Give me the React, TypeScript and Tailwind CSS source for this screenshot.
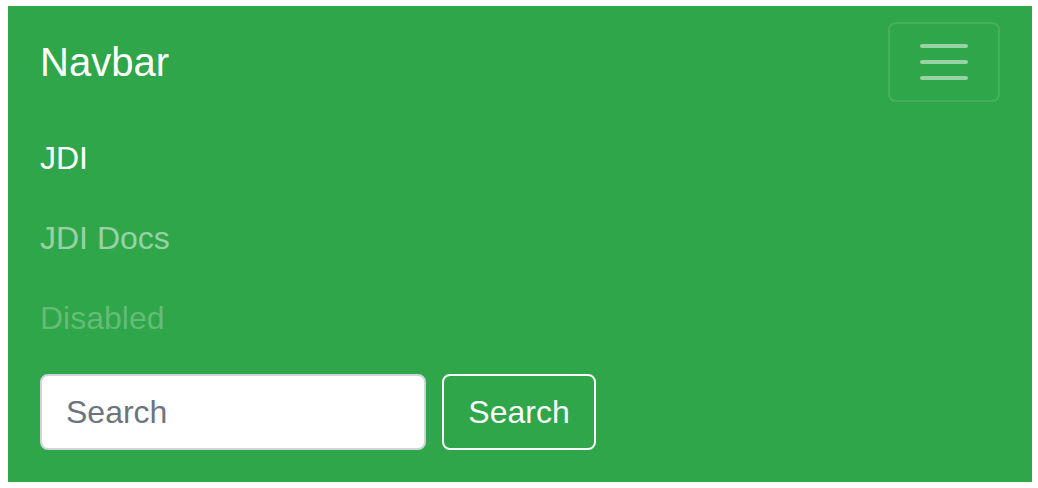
import { useState } from 'react'

function TogglerIcon() {
  return (
    <svg width="60" height="60" viewBox="0 0 30 30" xmlns="http://www.w3.org/2000/svg">
      <path
        d="M4 7h22M4 15h22M4 23h22"
        stroke="rgba(255,255,255,0.5)"
        strokeWidth="2"
        strokeLinecap="round"
        strokeMiterlimit="10"
      />
    </svg>
  )
}

export default function App() {
  const [query, setQuery] = useState('')

  return (
    <div className="min-h-screen bg-white pt-[6px] pl-[8px] pr-[6px] font-['Liberation_Sans',Arial,sans-serif]">
      <nav className="w-[1024px] bg-[#30a64a] px-[32px] py-[16px]">
        <div className="flex items-center justify-between">
          <a href="#" className="py-[10px] text-[40px] leading-[60px] text-white">
            Navbar
          </a>
          <button
            aria-label="Toggle navigation"
            className="flex h-[80px] w-[112px] items-center justify-center rounded-[8px] border-2 border-white/10 px-[24px] py-[8px]"
          >
            <TogglerIcon />
          </button>
        </div>

        <ul className="mt-[16px] flex flex-col">
          <li>
            <a href="#" className="block py-[16px] text-[32px] leading-[48px] text-white">
              JDI
            </a>
          </li>
          <li>
            <a href="#" className="block py-[16px] text-[32px] leading-[48px] text-white/50">
              JDI Docs
            </a>
          </li>
          <li>
            <span className="block py-[16px] text-[32px] leading-[48px] text-white/25">
              Disabled
            </span>
          </li>
        </ul>

        <form className="my-[16px] flex items-center gap-[16px]" onSubmit={(e) => e.preventDefault()}>
          <input
            value={query}
            onChange={(e) => setQuery(e.target.value)}
            placeholder="Search"
            className="h-[76px] w-[386px] rounded-[8px] border-2 border-[#ced4da] bg-white px-[24px] text-[32px] text-[#495057] outline-none placeholder:text-[#6c757d]"
          />
          <button
            type="submit"
            className="h-[76px] w-[154px] rounded-[8px] border-2 border-[#f8f9fa] text-[32px] leading-[48px] text-[#f8f9fa]"
          >
            Search
          </button>
        </form>
      </nav>
    </div>
  )
}
